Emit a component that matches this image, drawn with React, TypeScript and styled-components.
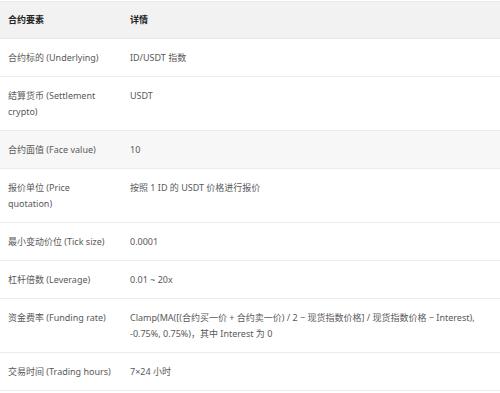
import * as React from 'react';
import styled, { createGlobalStyle } from 'styled-components';

const GlobalStyle = createGlobalStyle`
    html, body {
        margin: 0;
        padding: 0;
        background: #ffffff;
    }
    body {
        font-family: "Noto Sans", "Noto Sans CJK SC", sans-serif;
    }
`;

const Page = styled.div`
    width: 500px;
    padding-top: 1px;
`;

const Table = styled.table`
    width: 100%;
    border-collapse: collapse;
    table-layout: fixed;
    border-top: 1px solid #e9e9e9;
    font-size: 9px;
    line-height: 16px;
`;

const HeadCell = styled.th`
    background: #f2f2f2;
    color: #222222;
    font-weight: 700;
    text-align: left;
    padding: 10px 8px;
    border-bottom: 1px solid #e6e6e6;
`;

const Row = styled.tr<{ $shaded?: boolean }>`
    background: ${p => (p.$shaded ? '#f7f7f7' : '#ffffff')};
`;

const Cell = styled.td`
    color: #595959;
    vertical-align: top;
    padding: 10.5px 8px;
    border-bottom: 1px solid #ebebeb;
`;

interface Item {
    name: string;
    detail: string;
    shaded?: boolean;
}

const items: Item[] = [
    { name: '合约标的 (Underlying)', detail: 'ID/USDT 指数' },
    { name: '结算货币 (Settlement crypto)', detail: 'USDT' },
    { name: '合约面值 (Face value)', detail: '10', shaded: true },
    { name: '报价单位 (Price quotation)', detail: '按照 1 ID 的 USDT 价格进行报价' },
    { name: '最小变动价位 (Tick size)', detail: '0.0001' },
    { name: '杠杆倍数 (Leverage)', detail: '0.01 ~ 20x' },
    {
        name: '资金费率 (Funding rate)',
        detail: 'Clamp(MA([(合约买一价 + 合约卖一价) / 2 − 现货指数价格] / 现货指数价格 − Interest), -0.75%, 0.75%)，其中 Interest 为 0',
    },
    { name: '交易时间 (Trading hours)', detail: '7×24 小时' },
];

export default function App() {
    return (
        <Page>
            <GlobalStyle />
            <Table>
                <colgroup>
                    <col style={{ width: 122 }} />
                    <col />
                </colgroup>
                <thead>
                    <tr>
                        <HeadCell>合约要素</HeadCell>
                        <HeadCell>详情</HeadCell>
                    </tr>
                </thead>
                <tbody>
                    {items.map(item => (
                        <Row key={item.name} $shaded={item.shaded}>
                            <Cell>{item.name}</Cell>
                            <Cell>{item.detail}</Cell>
                        </Row>
                    ))}
                </tbody>
            </Table>
        </Page>
    );
}
